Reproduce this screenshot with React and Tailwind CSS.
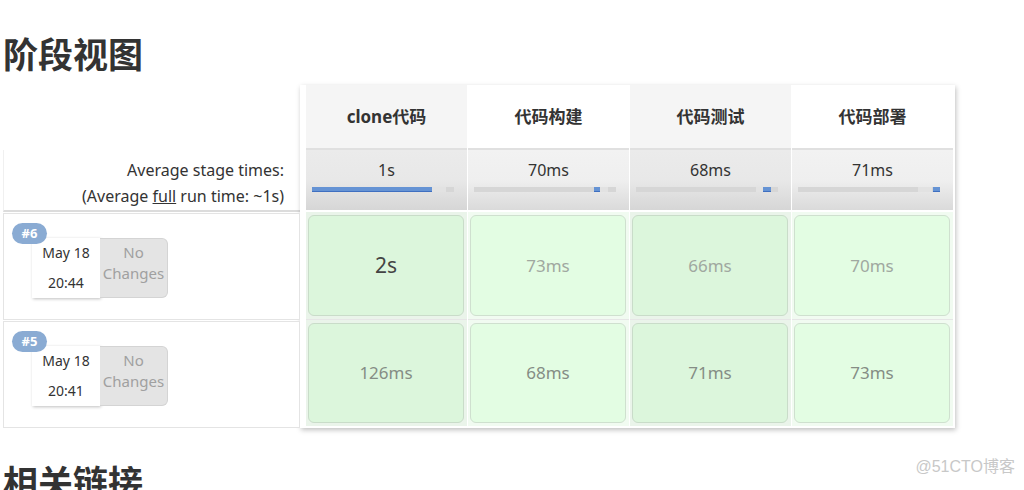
const font = { fontFamily: '"Noto Sans", "Noto Sans CJK SC", sans-serif' }

const stages = [
  { name: 'clone代码', avg: '1s', shade: true },
  { name: '代码构建', avg: '70ms', shade: false },
  { name: '代码测试', avg: '68ms', shade: true },
  { name: '代码部署', avg: '71ms', shade: false },
]

const builds = [
  { id: '#6', date: 'May 18', time: '20:44', times: ['2s', '73ms', '66ms', '70ms'] },
  { id: '#5', date: 'May 18', time: '20:41', times: ['126ms', '68ms', '71ms', '73ms'] },
]

// fill positions inside the 142px track
const fills = [
  { left: 0, width: 120 },
  { left: 120, width: 6 },
  { left: 127, width: 8 },
  { left: 135, width: 7 },
]

function Bar({ idx }) {
  const f = fills[idx]
  return (
    <div className="relative ml-[6px] h-[5px] w-[142px] bg-[#d6d6d6]">
      <div className="absolute right-[8px] top-0 h-full w-[14px] bg-[#e2e2e2]" />
      <div
        className="absolute top-0 h-full border-b border-[#3f6fc0] bg-[#6593d4]"
        style={{ left: f.left, width: f.width }}
      />
    </div>
  )
}

function BuildInfo({ b }) {
  return (
    <div className="relative h-[107px] border border-[#e4e4e4] bg-white">
      <div className="absolute left-[8px] top-[9px] z-10 flex h-[21px] w-[35px] items-center justify-center rounded-full bg-[#8aabd3] text-[13px] font-bold text-white">
        {b.id}
      </div>
      <div className="absolute left-[28px] top-[24px] flex">
        <div className="flex h-[60px] w-[68px] flex-col items-center justify-center gap-[8px] bg-white text-[14px] text-[#333] shadow-[1px_1px_3px_rgba(0,0,0,0.25)]">
          <span className="leading-[22px]">{b.date}</span>
          <span className="leading-[22px]">{b.time}</span>
        </div>
        <div className="flex h-[60px] w-[68px] flex-col items-center rounded-r-md border border-l-0 border-[#d4d4d4] bg-[#e4e4e4] pt-[3px] text-[15px] leading-[21px] text-[#a0a0a0]">
          <span>No</span>
          <span>Changes</span>
        </div>
      </div>
    </div>
  )
}

export default function App() {
  return (
    <div className="relative h-[490px] w-[1024px] overflow-hidden bg-white pl-[3px] text-[#333]" style={font}>
      <h1 className="pt-[33px] text-[35px] font-bold leading-[44px] text-[#333]">阶段视图</h1>

      <div className="mt-[8px] flex">
        <div className="w-[297px] pt-[65px]">
          <div className="flex h-[62px] flex-col items-end justify-center border-b-2 border-l border-[#dcdcdc] border-l-[#f0f0f0] pr-[16px] pt-[5px] text-[16px] leading-[26px] text-[#333]">
            <span>Average stage times:</span>
            <span>
              (Average <span className="underline">full</span> run time: ~1s)
            </span>
          </div>
          <div className="mt-[1px] flex flex-col gap-[1px]">
            {builds.map((b) => (
              <BuildInfo key={b.id} b={b} />
            ))}
          </div>
        </div>

        <div className="flex w-[655px] gap-px bg-white pb-[2px] pl-[6px] pr-[1px] shadow-[1px_2px_5px_rgba(0,0,0,0.25)]">
          {stages.map((s, i) => (
            <div key={s.name} className="flex w-[161px] flex-col">
              <div
                className={
                  s.shade
                    ? 'flex h-[63px] items-center justify-center bg-[#f5f5f5] text-[17px] font-bold text-[#333]'
                    : 'flex h-[63px] items-center justify-center bg-white text-[17px] font-bold text-[#333]'
                }
              >
                {s.name}
              </div>
              <div
                className={
                  s.shade
                    ? 'flex h-[62px] flex-col border-t-2 border-[#e0e0e0] bg-gradient-to-b from-[#ebebeb] via-[#e8e8e8] to-[#d6d6d6] pt-[9px]'
                    : 'flex h-[62px] flex-col border-t-2 border-[#e0e0e0] bg-gradient-to-b from-[#f2f2f2] via-[#efefef] to-[#dadada] pt-[9px]'
                }
              >
                <span className="text-center text-[16px] leading-[22px] text-[#333]">{s.avg}</span>
                <div className="mt-[6px] w-full">
                  <Bar idx={i} />
                </div>
              </div>
              <div className={s.shade ? 'mt-[2px] bg-[#eaf4ea]' : 'mt-[2px] bg-[#f1fbf1]'}>
                {builds.map((b, r) => (
                  <div
                    key={b.id}
                    className={r === 0 ? 'h-[107px] p-[3px] pl-[2px]' : 'h-[107px] border-t border-[#e6e6e6] p-[3px] pl-[2px]'}
                  >
                    <div
                      className={
                        s.shade
                          ? 'flex h-full items-center justify-center rounded-md border border-[#c9dcc9] bg-[#dcf6dc]'
                          : 'flex h-full items-center justify-center rounded-md border border-[#cfe0cf] bg-[#e3fde3]'
                      }
                    >
                      <span
                        className={
                          r === 0 && i === 0
                            ? 'text-[21px] text-[#444]'
                            : r === 0
                              ? 'text-[17px] text-[#a0a8a0]'
                              : 'text-[17px] text-[#858d85]'
                        }
                      >
                        {b.times[i]}
                      </span>
                    </div>
                  </div>
                ))}
              </div>
            </div>
          ))}
        </div>
      </div>

      <h2 className="mt-[33px] text-[35px] font-bold leading-[44px] text-[#333]">相关链接</h2>

      <div
        className="absolute bottom-[11px] right-[9px] text-[16px] text-[#c8c8c8]"
        style={{ fontFamily: '"Liberation Sans", "Noto Sans CJK SC", sans-serif' }}
      >
        @51CTO博客
      </div>
    </div>
  )
}
